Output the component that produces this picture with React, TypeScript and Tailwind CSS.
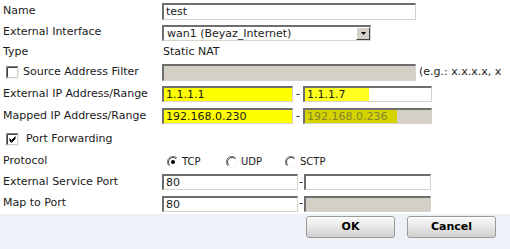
import React from "react";

const inputBase =
  "box-border border-t-2 border-l-2 border-r border-b border-t-[#6e6e6e] border-l-[#6e6e6e] border-r-[#d6d3cc] border-b-[#d6d3cc] text-[11px] leading-none pl-[2px] flex items-center overflow-hidden whitespace-nowrap";

function Field({
  w,
  h = 16,
  bg = "bg-white",
  children,
}: {
  w: string;
  h?: number;
  bg?: string;
  children?: React.ReactNode;
}) {
  return (
    <div className={`${inputBase} ${w} ${bg} ${h === 17 ? "h-[17px]" : "h-[16px]"}`}>{children}</div>
  );
}

function Check({ checked }: { checked?: boolean }) {
  return (
    <svg width="13" height="13" viewBox="0 0 13 13" className="shrink-0">
      <rect x="0" y="0" width="13" height="13" fill="#ffffff" />
      <path d="M0.5 12.5V0.5H12.5" stroke="#808080" fill="none" />
      <path d="M1.5 11.5V1.5H11.5" stroke="#404040" fill="none" />
      <path d="M0.5 12.5H12.5V0.5" stroke="#f0f0f0" fill="none" />
      <path d="M1.5 11.5H11.5V1.5" stroke="#d4d0c8" fill="none" />
      {checked && (
        <path d="M3.5 5.5L5.5 7.5L9.5 3.5M3.5 6.5L5.5 8.5L9.5 4.5M3.5 7.5L5.5 9.5L9.5 5.5" stroke="#000" fill="none" strokeWidth="1" />
      )}
    </svg>
  );
}

function Radio({ checked }: { checked?: boolean }) {
  return (
    <svg width="12" height="12" viewBox="0 0 12 12" className="shrink-0">
      <circle cx="6" cy="6" r="5.5" fill="#fff" />
      <path d="M10 2A5.5 5.5 0 0 0 2 10" stroke="#808080" fill="none" />
      <path d="M9.2 2.8A4.5 4.5 0 0 0 2.8 9.2" stroke="#404040" fill="none" />
      <path d="M2 10A5.5 5.5 0 0 0 10 2" stroke="#f4f4f4" fill="none" />
      {checked && <circle cx="6" cy="6" r="2" fill="#000" />}
    </svg>
  );
}

function Row({ h, label, children }: { h: string; label: React.ReactNode; children?: React.ReactNode }) {
  return (
    <div className={`flex items-center ${h}`}>
      <div className="w-[162px] shrink-0 pl-[3px] whitespace-nowrap">{label}</div>
      <div className="flex items-center">{children}</div>
    </div>
  );
}

function Btn({ children }: { children: React.ReactNode }) {
  return (
    <div className="w-[89px] h-[22px] flex items-center justify-center rounded-[3px] border border-[#9a9a9a] bg-gradient-to-b from-[#fafafa] via-[#e6e6e6] to-[#cfcfcf] text-[11px] font-bold text-black shadow-[inset_0_1px_0_#fff]">
      {children}
    </div>
  );
}

export default function App() {
  return (
    <div
      className="w-[510px] h-[249px] bg-white text-[11px] text-[#1a1a1a] overflow-hidden"
      style={{ fontFamily: '"DejaVu Sans", Verdana, sans-serif' }}
    >
      <Row h="h-[22px]" label="Name">
        <Field w="w-[254px]" h={17}>
          test
        </Field>
      </Row>
      <Row h="h-[21px]" label="External Interface">
        <div className="flex items-center h-[16px] w-[209px] box-border border-t-2 border-l-2 border-r border-b border-t-[#6e6e6e] border-l-[#6e6e6e] border-r-[#d6d3cc] border-b-[#d6d3cc] bg-white">
          <div className="flex-1 pl-[3px] text-[11px] leading-none whitespace-nowrap">wan1 (Beyaz_Internet)</div>
          <div className="w-[14px] h-[13px] bg-[#d4d0c8] border border-t-[#fff] border-l-[#fff] border-r-[#404040] border-b-[#404040] flex items-center justify-center">
            <svg width="5" height="3" viewBox="0 0 5 3">
              <path d="M0 0H5L2.5 3Z" fill="#000" />
            </svg>
          </div>
        </div>
      </Row>
      <Row h="h-[18px]" label="Type">
        <span className="pl-[1px]">Static NAT</span>
      </Row>
      <Row
        h="h-[22px]"
        label={
          <div className="flex items-center gap-[4px]">
            <span className="ml-[3px]">
              <Check />
            </span>
            <span>Source Address Filter</span>
          </div>
        }
      >
        <Field w="w-[254px]" h={17} bg="bg-[#d4d0c8]" />
        <span className="ml-[3px] whitespace-nowrap">(e.g.: x.x.x.x, x</span>
      </Row>
      <Row h="h-[22px]" label="External IP Address/Range">
        <Field w="w-[131px]" bg="bg-[#ffff00]">
          1.1.1.1
        </Field>
        <span className="w-[10px] text-center">-</span>
        <Field w="w-[129px]">
          <span className="bg-[#ffff20] h-full flex items-center pr-[24px] -ml-[2px] pl-[2px]">1.1.1.7</span>
        </Field>
      </Row>
      <Row h="h-[22px]" label="Mapped IP Address/Range">
        <Field w="w-[131px]" bg="bg-[#ffff00]">
          192.168.0.230
        </Field>
        <span className="w-[10px] text-center">-</span>
        <Field w="w-[129px]" bg="bg-[#d4d0c8]">
          <span className="bg-[#d6d400] text-[#85852e] h-full flex items-center pr-[10px] -ml-[2px] pl-[2px]">
            192.168.0.236
          </span>
        </Field>
      </Row>
      <Row
        h="h-[25px]"
        label={
          <div className="flex items-center gap-[7px]">
            <span className="ml-[3px]">
              <Check checked />
            </span>
            <span>Port Forwarding</span>
          </div>
        }
      />
      <Row h="h-[19px]" label="Protocol">
        <div className="flex items-center pl-[5px] text-[10px]">
          <div className="w-[59px] flex items-center">
            <Radio checked />
            <span className="ml-[3px]">TCP</span>
          </div>
          <div className="w-[59px] flex items-center">
            <Radio />
            <span className="ml-[3px]">UDP</span>
          </div>
          <div className="flex items-center">
            <Radio />
            <span className="ml-[3px]">SCTP</span>
          </div>
        </div>
      </Row>
      <Row h="h-[22px]" label="External Service Port">
        <Field w="w-[136px]">80</Field>
        <span className="w-[6px] text-center">-</span>
        <Field w="w-[127px]" />
      </Row>
      <Row h="h-[21px]" label="Map to Port">
        <Field w="w-[136px]">80</Field>
        <span className="w-[6px] text-center">-</span>
        <Field w="w-[127px]" bg="bg-[#d4d0c8]" />
      </Row>
      <div className="h-[35px] bg-[#eef1f7] flex items-start justify-end pr-[14px] pt-[2px] gap-[12px]">
        <Btn>OK</Btn>
        <Btn>Cancel</Btn>
      </div>
    </div>
  );
}
